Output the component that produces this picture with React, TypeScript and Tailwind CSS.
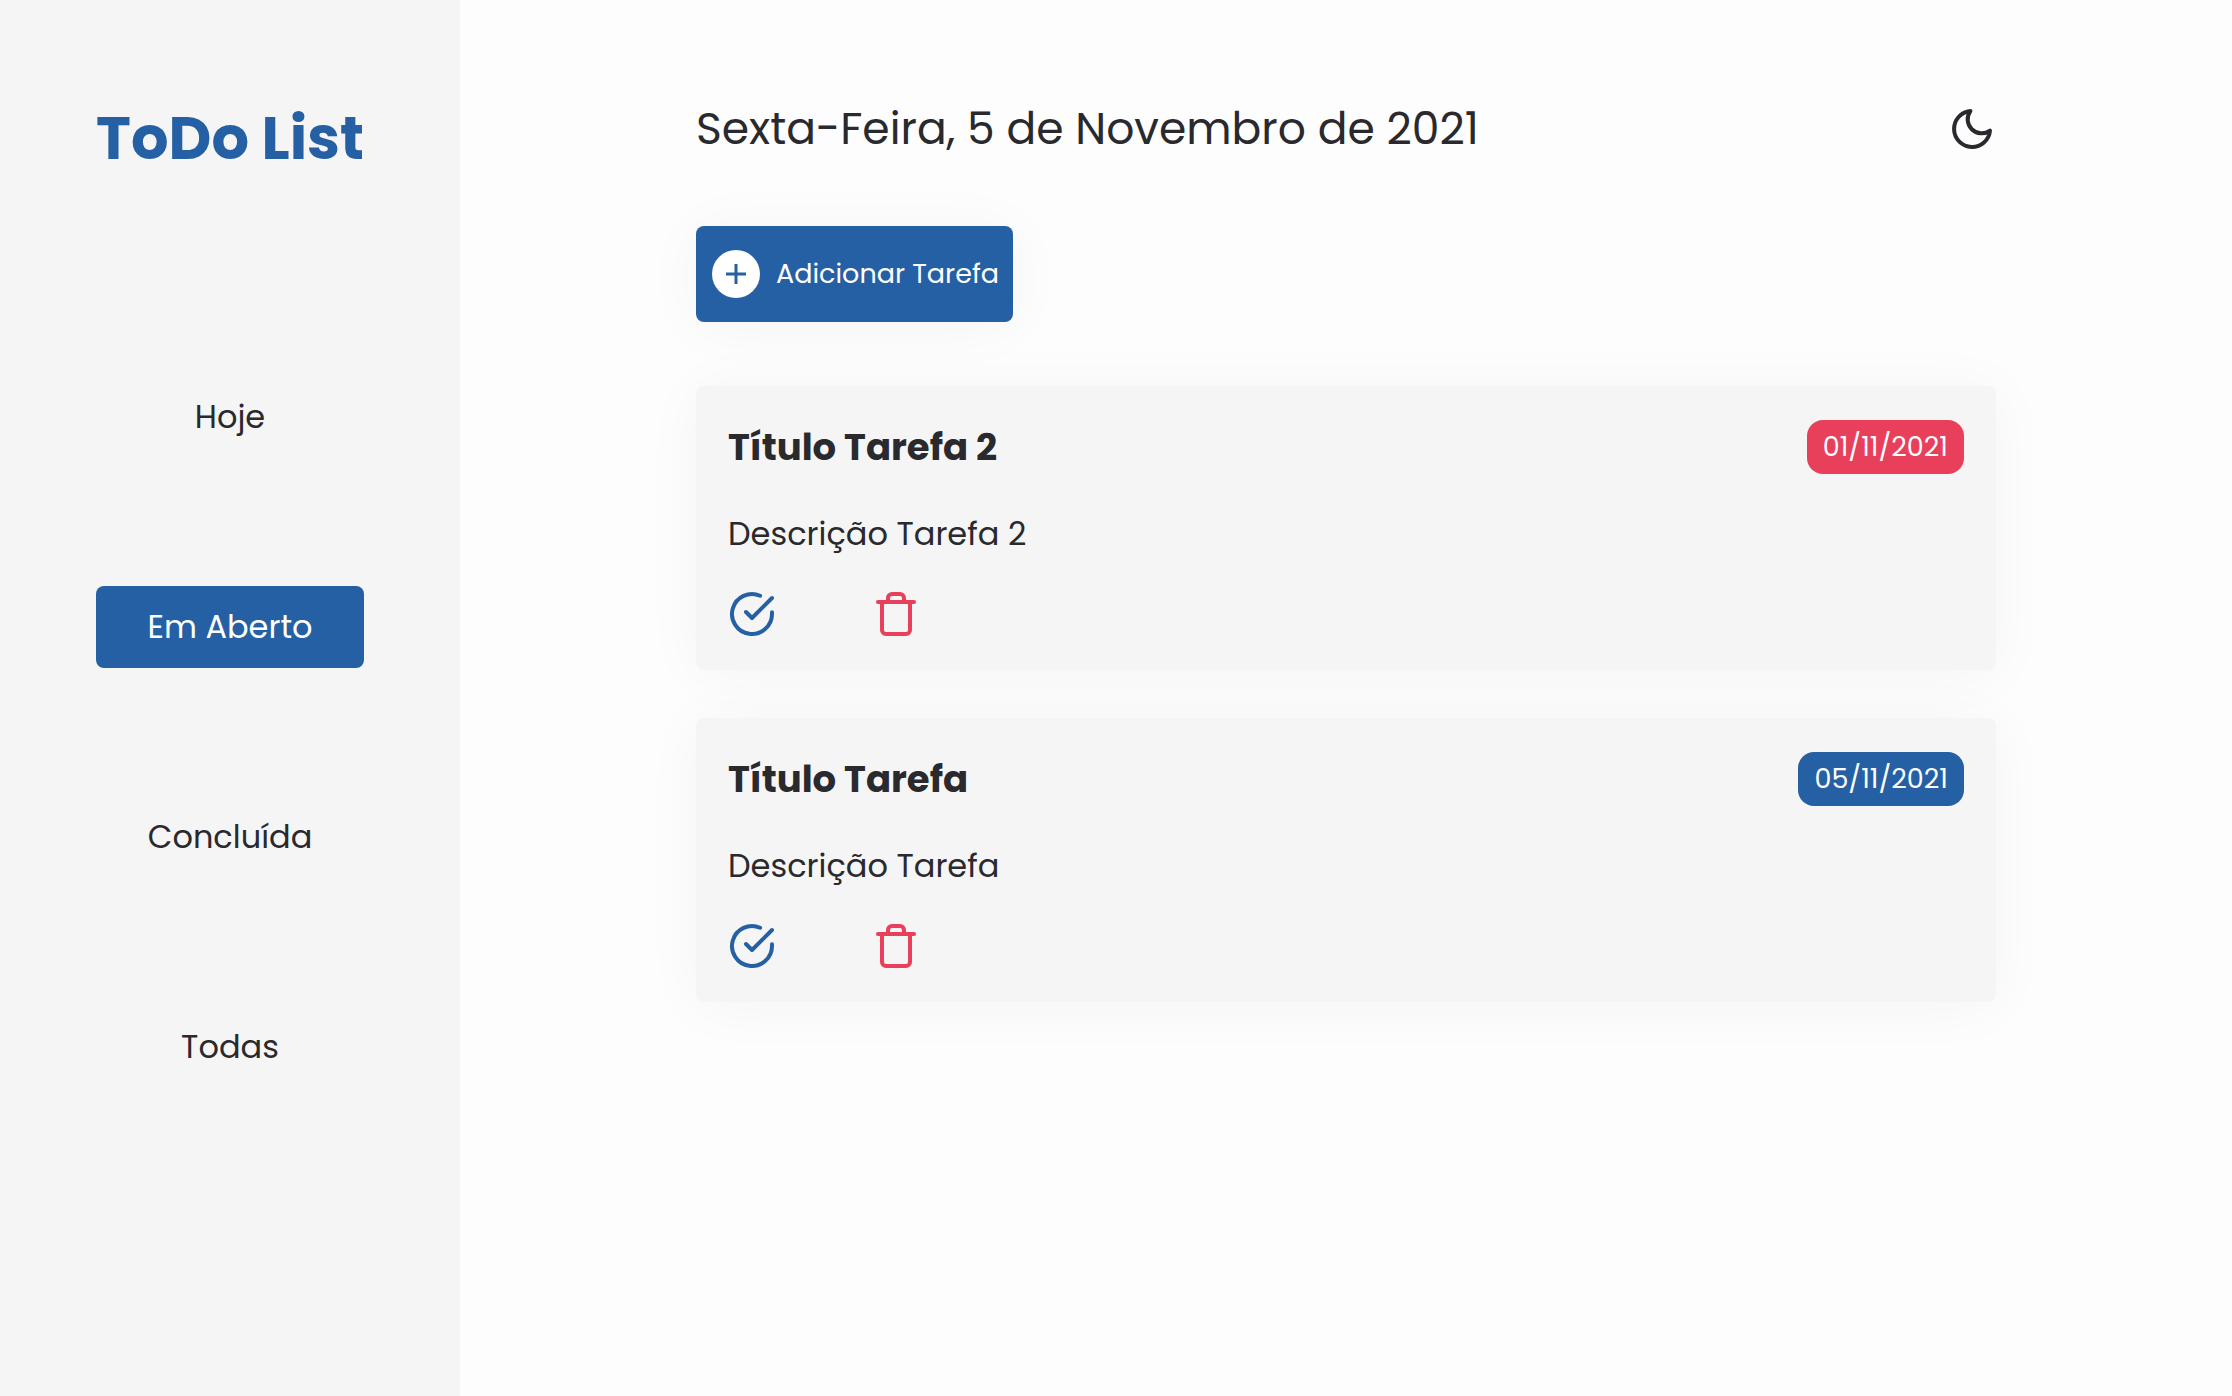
import { FiCheckCircle, FiMoon, FiTrash } from "react-icons/fi";

type Task = { title: string; description: string; date: string; late: boolean };

const filters = ["Hoje", "Em Aberto", "Concluída", "Todas"];

const tasks: Task[] = [
  { title: "Título Tarefa 2", description: "Descrição Tarefa 2", date: "01/11/2021", late: true },
  { title: "Título Tarefa", description: "Descrição Tarefa", date: "05/11/2021", late: false },
];

function Sidebar({ active }: { active: string }) {
  return (
    <aside className="flex w-[460px] shrink-0 flex-col items-center bg-[#f5f5f5] px-24 pt-24">
      <h1 className="text-[59px] leading-[86px] font-bold whitespace-nowrap text-[#2560a4]">ToDo List</h1>
      <nav className="mt-[194px] flex w-full flex-col gap-32">
        {filters.map((name) => (
          <button
            key={name}
            type="button"
            aria-pressed={name === active}
            className={
              name === active
                ? "h-[82px] w-full rounded-lg bg-[#2560a4] text-[32px] leading-[48px] text-[#fdfdfd]"
                : "h-[82px] w-full rounded-lg text-[32px] leading-[48px] text-[#29292e]"
            }
          >
            {name}
          </button>
        ))}
      </nav>
    </aside>
  );
}

function TaskCard({ task }: { task: Task }) {
  return (
    <article className="rounded-lg bg-[#f5f5f5] px-8 pt-[34px] pb-8 shadow-[0_4px_60px_rgba(0,0,0,0.04)]">
      <div className="flex items-center justify-between">
        <h2 className="text-[37px] leading-[54px] font-bold">{task.title}</h2>
        <time
          className={
            task.late
              ? "rounded-2xl bg-[#e83f5b] px-4 text-[27px] leading-[54px] text-[#fdfdfd]"
              : "rounded-2xl bg-[#2560a4] px-4 text-[27px] leading-[54px] text-[#fdfdfd]"
          }
        >
          {task.date}
        </time>
      </div>
      <p className="mt-9 text-[32px] leading-[48px]">{task.description}</p>
      <div className="mt-8 flex gap-24">
        <button type="button" aria-label="Concluir tarefa" className="text-[#2560a4]">
          <FiCheckCircle className="size-12" />
        </button>
        <button type="button" aria-label="Excluir tarefa" className="text-[#e83f5b]">
          <FiTrash className="size-12" />
        </button>
      </div>
    </article>
  );
}

export default function App() {
  return (
    <div className="flex min-h-screen bg-[#fdfdfd] font-['Poppins','Inter',sans-serif] text-[#29292e]">
      <Sidebar active="Em Aberto" />
      <main className="flex flex-1 justify-center px-16 pt-24">
        <div className="w-full max-w-[1300px]">
          <header className="flex items-center justify-between">
            <p className="text-[44px] leading-[66px]">Sexta-Feira, 5 de Novembro de 2021</p>
            <button type="button" aria-label="Alternar tema">
              <FiMoon className="size-12" />
            </button>
          </header>
          <button
            type="button"
            className="mt-16 flex h-24 items-center gap-4 rounded-lg bg-[#2560a4] pr-3.5 pl-4 text-[27px] leading-[40px] text-[#fdfdfd] shadow-[0_4px_60px_rgba(0,0,0,0.04)]"
          >
            <span className="flex size-12 items-center justify-center rounded-full bg-white text-[#2560a4]">
              <svg viewBox="0 0 20 20" className="size-5" fill="none" stroke="currentColor" strokeWidth="3">
                <path d="M10 0v20M0 10h20" />
              </svg>
            </span>
            Adicionar Tarefa
          </button>
          <section className="mt-16 flex flex-col gap-12">
            {tasks.map((task) => (
              <TaskCard key={task.title} task={task} />
            ))}
          </section>
        </div>
      </main>
    </div>
  );
}
